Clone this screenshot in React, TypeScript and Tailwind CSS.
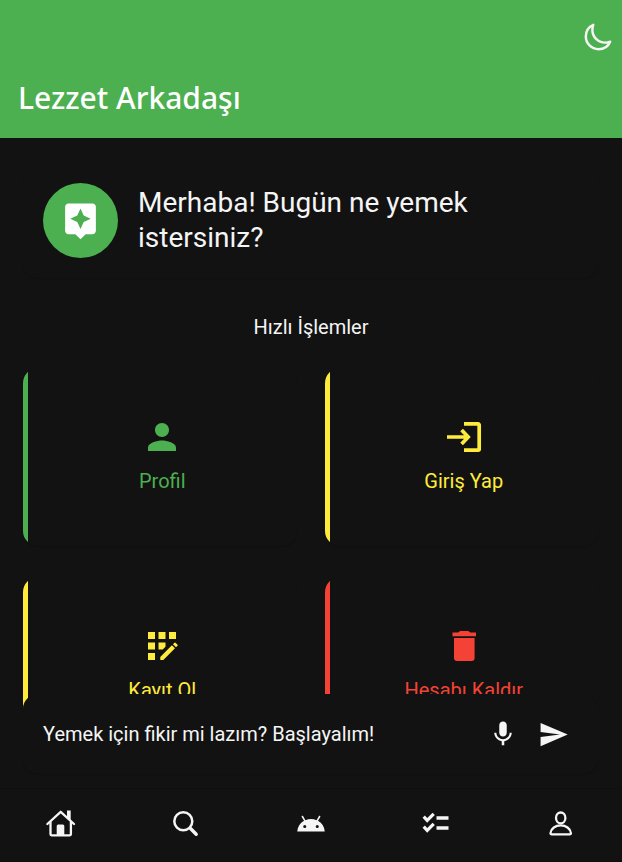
import React from "react";
import { MdAndroid, MdAppRegistration, MdAssistant, MdMic, MdPerson, MdSend } from "react-icons/md";

function MoonIcon() {
  return (
    <svg viewBox="0 0 512 512" className="size-[30px]" fill="none" stroke="currentColor" strokeWidth="42" strokeLinejoin="round" aria-hidden="true">
      <path d="M160 136c0-30.62 4.51-61.61 16-88C99.57 81.27 48 159.32 48 248c0 119.29 96.71 216 216 216 88.68 0 166.73-51.57 200-128-26.39 11.49-57.38 16-88 16-119.29 0-216-96.71-216-216z" />
    </svg>
  );
}

function LoginIcon() {
  return (
    <svg viewBox="0 0 42 42" className="size-[42px]" fill="none" stroke="currentColor" strokeWidth="3.7" aria-hidden="true">
      <path d="M21 7.9h14.2a1 1 0 0 1 1 1v24.2a1 1 0 0 1-1 1H21" />
      <path d="M4 21h20M18.6 14l6.600 7-6.600 7" />
    </svg>
  );
}

function TrashIcon() {
  return (
    <svg viewBox="0 0 42 42" className="size-[42px]" fill="currentColor" aria-hidden="true">
      <path d="M9.5 7.5h5.6c.8 0 1-1.5 2.6-1.5h7.1c1.6 0 1.8 1.5 2.6 1.5H33v3.8H9.5z" />
      <path d="M11 13h20.6v20a3 3 0 0 1-3 3H14a3 3 0 0 1-3-3z" />
    </svg>
  );
}

function HomeIcon() {
  return (
    <svg viewBox="0 0 30 30" className="size-[30px]" fill="none" stroke="currentColor" strokeWidth="2.3" strokeLinecap="round" strokeLinejoin="round" aria-hidden="true">
      <path d="M1.4 15 14.7 2.8 28 15" />
      <path d="M4.5 13v12.3a1 1 0 0 0 1 1h18.4a1 1 0 0 0 1-1V13" />
      <path d="M21 1.5h3.7v10L21 8z" fill="currentColor" stroke="none" />
      <path d="M10.7 26.5V17a1.5 1.5 0 0 1 1.5-1.5h4.6a1.5 1.5 0 0 1 1.5 1.5v9.5z" fill="currentColor" stroke="none" />
    </svg>
  );
}

function SearchIcon() {
  return (
    <svg viewBox="0 0 30 30" className="size-[30px]" fill="none" stroke="currentColor" strokeLinecap="round" aria-hidden="true">
      <circle cx="12.3" cy="12.3" r="9" strokeWidth="2.5" />
      <path d="m19.5 19.5 5.7 5.7" strokeWidth="3.4" />
    </svg>
  );
}

function TasksIcon() {
  return (
    <svg viewBox="0 0 30 30" className="size-[30px]" fill="none" stroke="currentColor" strokeWidth="3.2" aria-hidden="true">
      <path d="m2.7 7.700 3.500 3.700 6.500-6.600M2.700 17.700l3.500 3.700 6.500-6.600" />
      <path d="M15.5 9h12M15.5 19h12" strokeWidth="3.4" />
    </svg>
  );
}

function UserIcon() {
  return (
    <svg viewBox="0 0 30 30" className="size-[30px]" fill="none" stroke="currentColor" strokeWidth="2.3" strokeLinejoin="round" aria-hidden="true">
      <ellipse cx="14.7" cy="8.9" rx="4.7" ry="5.4" />
      <path d="M4.5 24c.5-4.6 5-7.6 10.200-7.600S24.400 19.400 24.900 24c.1.900-.4 1.400-1.200 1.400h-18c-.8 0-1.300-.5-1.200-1.400z" />
    </svg>
  );
}

const actions = [
  { label: "Profil", text: "text-[#4caf50]", bar: "bg-[#4caf50]", icon: <MdPerson size={42} /> },
  { label: "Giriş Yap", text: "text-[#ffeb3b]", bar: "bg-[#ffeb3b]", icon: <LoginIcon /> },
  { label: "Kayıt Ol", text: "text-[#ffeb3b]", bar: "bg-[#ffeb3b]", icon: <MdAppRegistration size={42} /> },
  { label: "Hesabı Kaldır", text: "text-[#f44336]", bar: "bg-[#f44336]", icon: <TrashIcon /> },
];

const tabs = [
  { label: "Ana sayfa", icon: <HomeIcon /> },
  { label: "Ara", icon: <SearchIcon /> },
  { label: "Asistan", icon: <MdAndroid size={30} /> },
  { label: "Listeler", icon: <TasksIcon /> },
  { label: "Hesap", icon: <UserIcon /> },
];

export default function App() {
  return (
    <div className="flex h-screen flex-col overflow-hidden bg-[#121212] font-['Roboto',sans-serif] text-[#f5f5f5]">
      <header className="flex shrink-0 flex-col bg-[#4caf50] pt-[22px] pb-[19px]">
        <button type="button" aria-label="Karanlık mod" className="mr-[9px] self-end">
          <MoonIcon />
        </button>
        <h1 className="mt-[25px] pl-[18px] font-['Noto_Sans',sans-serif] text-[30px] leading-[42px] font-medium text-white">Lezzet Arkadaşı</h1>
      </header>

      <main className="min-h-0 flex-1 overflow-hidden px-6 pt-[25px]">
        <section className="-ml-px flex items-center gap-5 rounded-[15px] p-5 shadow-[0_1px_1px_#101010]">
          <div className="flex size-[75px] shrink-0 items-center justify-center rounded-full bg-[#4caf50] text-white">
            <MdAssistant size={41} />
          </div>
          <p className="flex-1 pb-0.5 text-[28px] leading-[35px]">Merhaba! Bugün ne yemek istersiniz?</p>
        </section>

        <h2 className="mt-[35px] text-center text-xl leading-7">Hızlı İşlemler</h2>

        <div className="-ml-px mt-[27px] grid grid-cols-2 gap-x-7 gap-y-[31px]">
          {actions.map((a) => (
            <button
              key={a.label}
              type="button"
              className={`flex h-[178px] overflow-hidden rounded-[15px] shadow-[0_1px_1px_#101010] ${a.text}`}
            >
              <span className={`w-[5px] self-stretch ${a.bar}`} />
              <span className="flex flex-1 flex-col items-center gap-[9px] self-center pb-1">
                {a.icon}
                <span className="text-xl leading-7">{a.label}</span>
              </span>
            </button>
          ))}
        </div>
      </main>

      <form
        onSubmit={(e) => e.preventDefault()}
        className="relative mr-6 -mt-[15px] ml-[23px] flex h-20 shrink-0 items-center rounded-[15px] bg-[#121212] pr-[29px] pl-5 shadow-[0_1px_1px_#101010]"
      >
        <input
          type="text"
          aria-label="Mesaj"
          placeholder="Yemek için fikir mi lazım? Başlayalım!"
          className="min-w-0 flex-1 bg-transparent text-xl leading-7 outline-none placeholder:text-[#f5f5f5] placeholder:opacity-100"
        />
        <button type="button" aria-label="Sesli giriş">
          <MdMic size={30} />
        </button>
        <button type="submit" aria-label="Gönder" className="ml-5">
          <MdSend size={31} />
        </button>
      </form>

      <nav className="mt-[14px] flex h-[74px] shrink-0 items-center justify-between border-y border-[#0f0f0f] px-[46px] pb-0.5">
        {tabs.map((t) => (
          <button key={t.label} type="button" aria-label={t.label}>
            {t.icon}
          </button>
        ))}
      </nav>
    </div>
  );
}
